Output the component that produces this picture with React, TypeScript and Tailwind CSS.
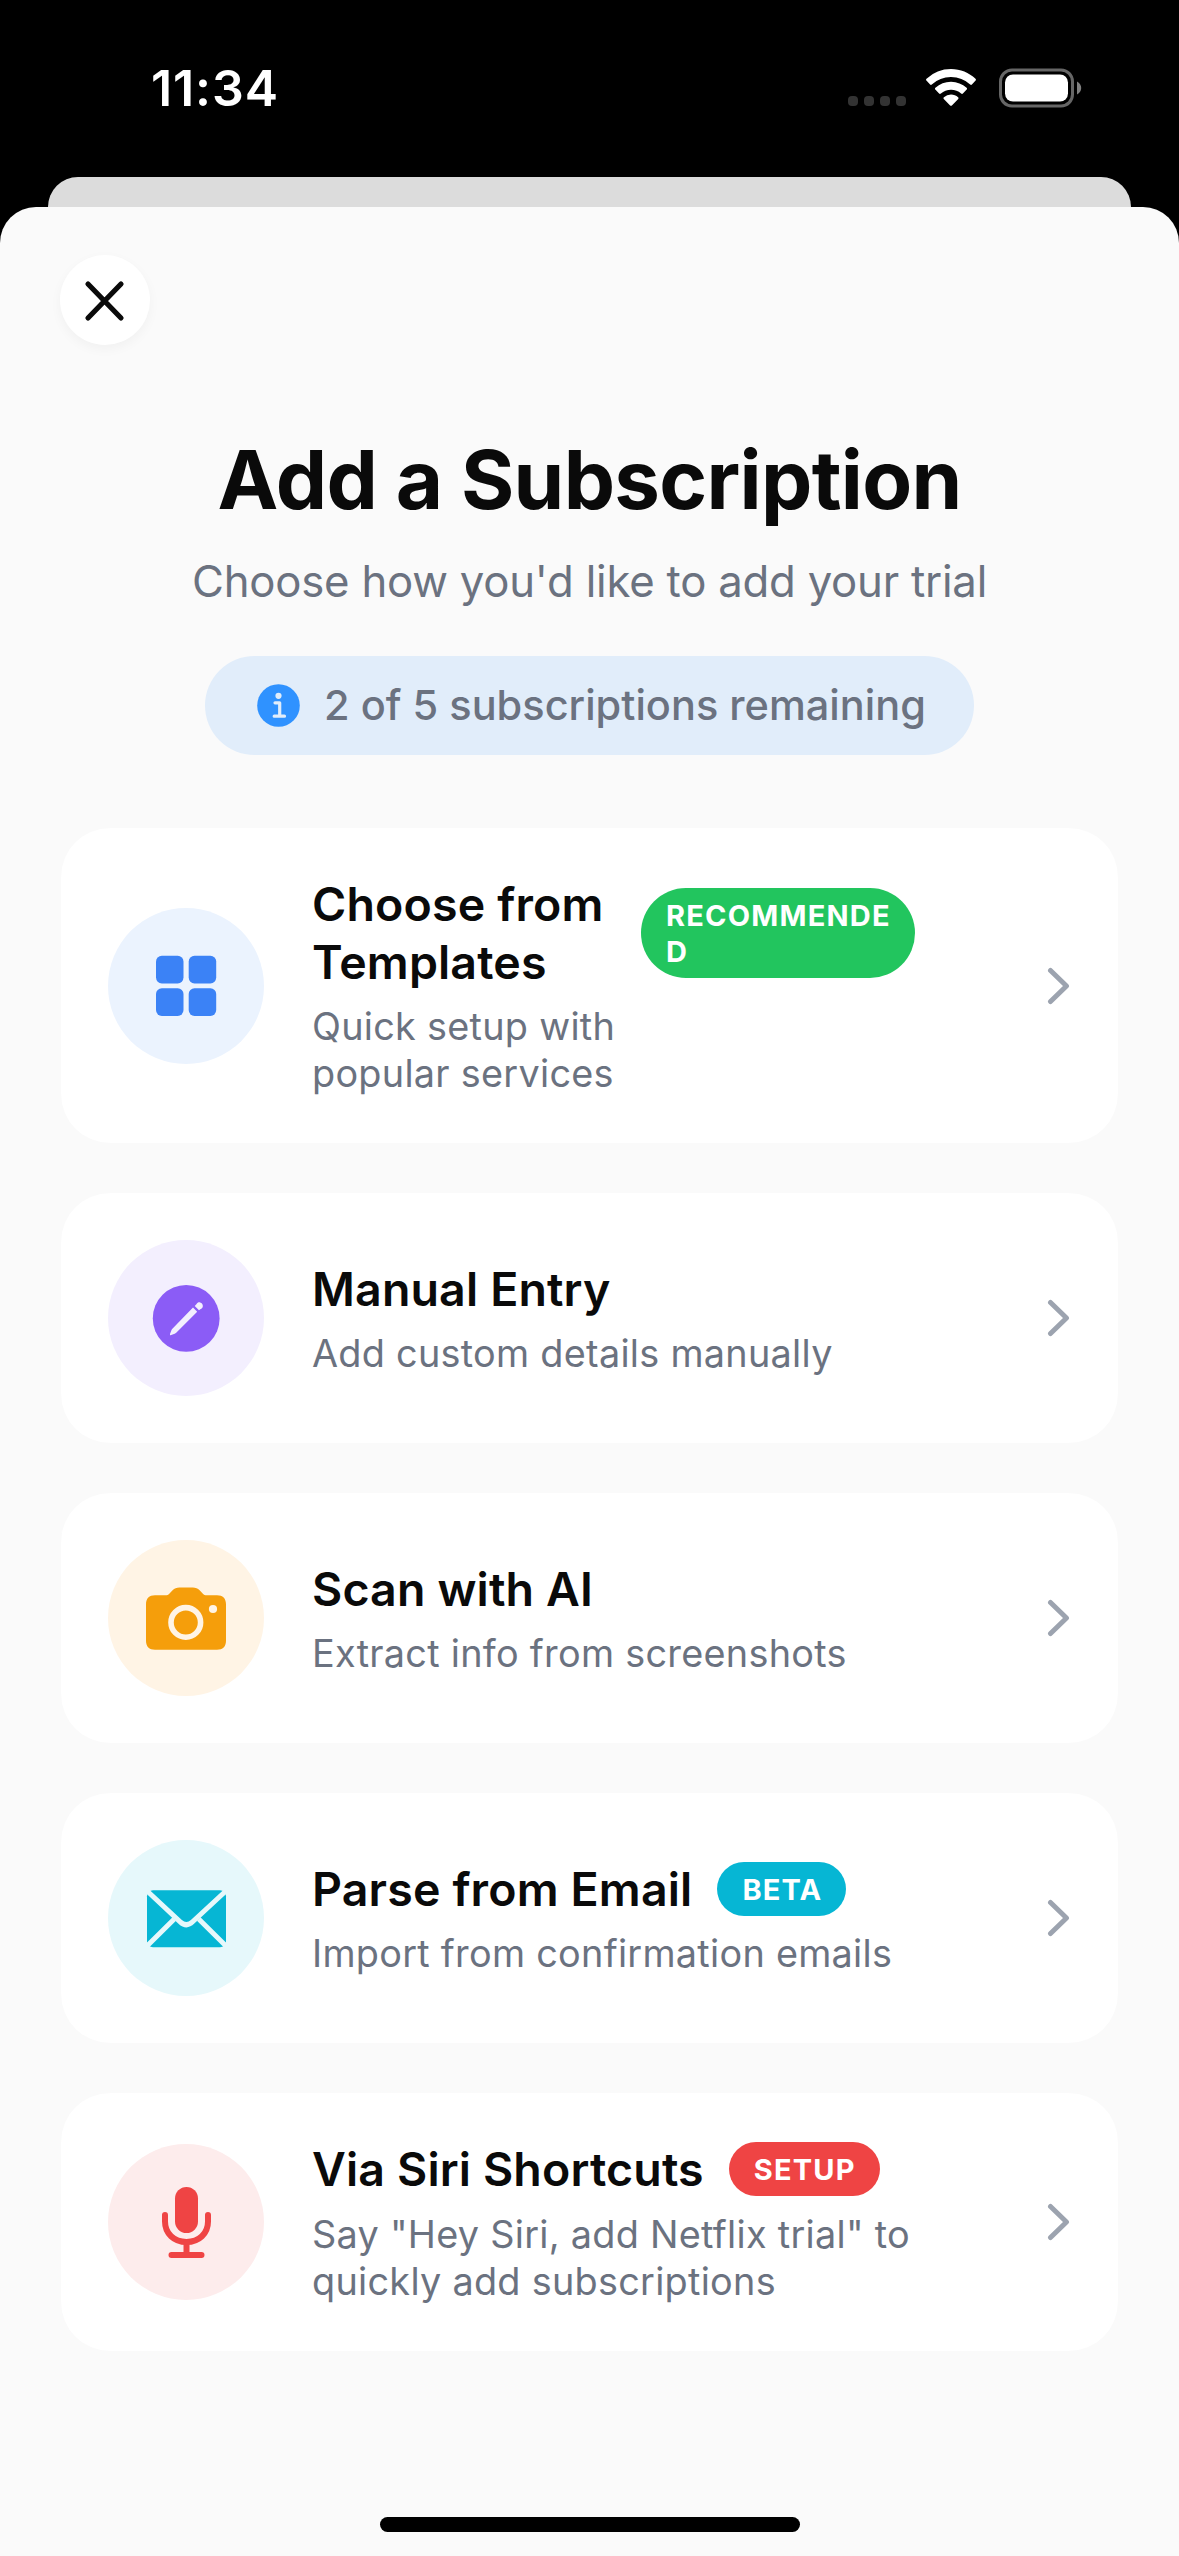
import type { ReactNode } from "react";

function StatusBar() {
  return (
    <header className="flex h-[177px] items-start justify-between bg-black pt-[58px] pr-[94px] pl-[151px]">
      <div className="text-[50px] leading-[60px] font-semibold tracking-[0.9px] text-white">11:34</div>
      <div className="flex h-[60px] items-center">
        <div className="mt-[26px] mr-[19px] flex gap-[6px]">
          <span className="size-[10px] rounded-[4px] bg-[#333333]" />
          <span className="size-[10px] rounded-[4px] bg-[#333333]" />
          <span className="size-[10px] rounded-[4px] bg-[#333333]" />
          <span className="size-[10px] rounded-[4px] bg-[#333333]" />
        </div>
        <svg className="mr-[22px] h-[38px] w-[52px]" viewBox="0 0 52 38" fill="#fff">
          <path d="M26 0c9.400 0 18 3.700 24.500 9.700.6.600.6 1.300.1 1.900l-3.700 3.900c-.5.500-1.200.5-1.700 0A28.200 28.200 0 0 0 26 8 28.200 28.200 0 0 0 6.800 15.500c-.5.500-1.200.5-1.700 0l-3.700-3.900c-.5-.6-.5-1.300.1-1.900A36 36 0 0 1 26 0z" />
          <path d="M26 12.700c6 0 11.400 2.300 15.600 6.100.6.600.6 1.300.1 1.800l-3.800 3.900c-.5.500-1.200.5-1.800 0A15.300 15.300 0 0 0 26 20.800c-3.900 0-7.400 1.400-10.100 3.700-.6.500-1.300.5-1.800 0l-3.800-3.900c-.5-.5-.5-1.200.1-1.800A23.200 23.200 0 0 1 26 12.700z" />
          <path d="M26 25.600c2.700 0 5.200 1 7.100 2.600.6.500.6 1.200.1 1.700l-6.300 6.500c-.5.500-1.300.5-1.800 0l-6.300-6.500c-.5-.5-.5-1.200.1-1.700a11 11 0 0 1 7.100-2.600z" />
        </svg>
        <svg className="h-[40px] w-[86px]" viewBox="0 0 86 40">
          <rect x="1.500" y="2" width="72" height="36" rx="11.500" fill="none" stroke="#666666" strokeWidth="3" />
          <rect x="6" y="6.500" width="63" height="27" rx="8" fill="#fff" />
          <path d="M78 13.500c2.600 1.300 4.200 3.600 4.200 6.500s-1.600 5.200-4.200 6.500z" fill="#808080" />
        </svg>
      </div>
    </header>
  );
}

function GridIcon() {
  return (
    <svg className="size-[100px]" viewBox="0 0 100 100" fill="#3b82f6">
      <rect x="20" y="19.700" width="27.500" height="27.700" rx="5.800" />
      <rect x="52.700" y="19.700" width="27.500" height="27.700" rx="5.800" />
      <rect x="20" y="52.200" width="27.500" height="27.700" rx="5.800" />
      <rect x="52.700" y="52.200" width="27.500" height="27.700" rx="5.800" />
    </svg>
  );
}

function PencilIcon() {
  return (
    <svg className="size-[100px]" viewBox="0 -2 100 100">
      <circle cx="50.200" cy="48.400" r="33.400" fill="#8b5cf6" />
      <path
        d="M57 37.600l4.200 4.200-21 20.900c-.5.500-.9.800-1.500 1l-3.500 1.400c-.8.300-1.500-.4-1.200-1.200l1.400-3.600c.2-.6.500-1.100 1-1.600zM58.700 35.900l1.900-1.900c.6-1.300 2-1.900 3.500-1.600 1.900.4 3 2.200 2.700 4-.2 1.100-.8 1.800-1.700 2.300l-2.100 1.600z"
        fill="#f3effe"
      />
    </svg>
  );
}

function CameraIcon() {
  return (
    <svg className="size-[100px]" viewBox="0 -2 100 100">
      <path
        d="M19 25.300h10.500c1.800 0 2.700-.5 3.800-1.600l3.300-3.400c1.900-2 3.900-2.900 6.900-2.900h13.200c3 0 5 .9 6.900 2.900l3.300 3.400c1.100 1.100 2 1.600 3.800 1.600H81c5.800 0 9 3.200 9 9v36.500c0 5.800-3.200 9-9 9H19c-5.800 0-9-3.200-9-9V34.300c0-5.800 3.200-9 9-9z"
        fill="#f59e0b"
      />
      <circle cx="49.800" cy="52.400" r="14.800" fill="none" stroke="#fff4e5" strokeWidth="5.600" />
      <circle cx="77" cy="39" r="4.100" fill="#fff4e5" />
    </svg>
  );
}

function MailIcon() {
  return (
    <svg className="size-[100px]" viewBox="0 0 100 100">
      <rect x="11" y="22.200" width="79" height="57" rx="6" fill="#06b6d4" />
      <g fill="none" stroke="#e6f8fb" strokeWidth="5">
        <path d="M9 21l35.200 32.800c4 3.800 8.400 3.800 12.400 0L92 21" />
        <path d="M9.500 79.500L38.300 51M91.500 79.500L62.700 51" />
      </g>
    </svg>
  );
}

function MicIcon() {
  return (
    <svg className="size-[100px]" viewBox="0 2 100 100">
      <rect x="39" y="17" width="23" height="46" rx="11.500" fill="#ef4444" />
      <g fill="none" stroke="#ef4444" strokeWidth="6" strokeLinecap="round">
        <path d="M29 45v6.500C29 63.500 38 72 50.500 72S72 63.500 72 51.500V45" />
        <path d="M50.500 72v12M35.500 85h30" />
      </g>
    </svg>
  );
}

function Chevron() {
  return (
    <svg className="h-[40px] w-[24px] shrink-0" viewBox="0 0 24 40" fill="none">
      <path d="M3.500 4.500L19.500 20l-16 15.500" stroke="#9ca3af" strokeWidth="5" strokeLinecap="round" strokeLinejoin="round" />
    </svg>
  );
}

type Option = {
  title: ReactNode;
  titleClass?: string;
  detail: ReactNode;
  icon: ReactNode;
  tint: string;
  badge?: ReactNode;
  badgeClass?: string;
};

const options: Option[] = [
  {
    title: <>Choose from<br />Templates</>,
    titleClass: "w-[304px]",
    detail: <>Quick setup with<br />popular services</>,
    icon: <GridIcon />,
    tint: "bg-[#ebf3fe]",
    badge: <>RECOMMENDE<br />D</>,
    badgeClass: "w-[274px] bg-[#22c55e]",
  },
  {
    title: "Manual Entry",
    detail: "Add custom details manually",
    icon: <PencilIcon />,
    tint: "bg-[#f3effe]",
  },
  {
    title: "Scan with AI",
    detail: "Extract info from screenshots",
    icon: <CameraIcon />,
    tint: "bg-[#fff4e5]",
  },
  {
    title: "Parse from Email",
    detail: "Import from confirmation emails",
    icon: <MailIcon />,
    tint: "bg-[#e6f8fb]",
    badge: "BETA",
    badgeClass: "bg-[#06b6d4]",
  },
  {
    title: "Via Siri Shortcuts",
    detail: <>Say "Hey Siri, add Netflix trial" to<br />quickly add subscriptions</>,
    icon: <MicIcon />,
    tint: "bg-[#fdecec]",
    badge: "SETUP",
    badgeClass: "bg-[#ef4444]",
  },
];

function OptionCard({ title, titleClass = "", detail, icon, tint, badge, badgeClass = "" }: Option) {
  return (
    <button className="flex w-full items-center rounded-[50px] border border-[#fafafa] bg-white p-[47px] text-left">
      <span className={`flex size-[156px] shrink-0 items-center justify-center rounded-full ${tint}`}>{icon}</span>
      <span className="mt-px -mb-px ml-12 flex flex-1 flex-col gap-3 whitespace-nowrap">
        <span className="flex items-center gap-6">
          <span className={`text-[46.5px] leading-[57.5px] font-semibold tracking-[0.15px] text-[#0a0a0a] ${titleClass}`}>
            {title}
          </span>
          {badge && (
            <span
              className={`mb-[2px] ml-px rounded-[45px] pt-[10px] pr-[24px] pb-[8px] pl-[25px] text-[29px] leading-[36px] font-bold tracking-[1.2px] text-white ${badgeClass}`}
            >
              {badge}
            </span>
          )}
        </span>
        <span className="text-[37.8px] leading-[47px] tracking-[0.28px] text-[#6b7280]">{detail}</span>
      </span>
      <Chevron />
    </button>
  );
}

export default function App() {
  return (
    <div className="flex h-[2556px] w-[1179px] flex-col overflow-hidden bg-black font-['Inter',sans-serif]">
      <StatusBar />
      <div className="mx-[48px] h-[30px] shrink-0 rounded-t-[32px] bg-[#dcdcdc]" />
      <main className="flex flex-1 flex-col rounded-t-[36px] bg-[#fafafa] px-[60px] pt-[48px]">
        <button
          aria-label="Close"
          className="flex size-[90px] items-center justify-center rounded-full bg-white shadow-[0_4px_12px_rgba(0,0,0,0.04)]"
        >
          <svg className="size-[48px]" viewBox="0 0 48 48" fill="none">
            <path d="M7 8l33 34M40 8L7 42" stroke="#0a0a0a" strokeWidth="5.200" strokeLinecap="round" />
          </svg>
        </button>

        <div className="mt-[85px] flex flex-col items-center whitespace-nowrap">
          <h1 className="text-[81.5px] leading-[100px] font-bold tracking-[-0.7px] text-[#0a0a0a]">Add a Subscription</h1>
          <p className="mt-[25px] text-[43.7px] leading-[54px] tracking-[-0.22px] text-[#6b7280]">
            Choose how you'd like to add your trial
          </p>
          <div className="mt-[47px] flex h-[99px] items-center rounded-full bg-[#e1edfa] pr-[48px] pl-[52px] text-[41.5px] font-medium text-[#6b7280]">
            <svg className="mr-[24px] size-[43px]" viewBox="0 0 43 43">
              <circle cx="21.500" cy="21.500" r="21.300" fill="#2f92ff" />
              <circle cx="21.500" cy="11.800" r="3.100" fill="#e1edfa" />
              <path d="M18 18.800h4.700v13M17.200 32.200h10.300" fill="none" stroke="#e1edfa" strokeWidth="3.200" strokeLinecap="round" strokeLinejoin="round" />
            </svg>
            2 of 5 subscriptions remaining
          </div>
        </div>

        <div className="mt-[72px] flex flex-col gap-12">
          {options.map((option, i) => (
            <OptionCard key={i} {...option} />
          ))}
        </div>

        <div className="mt-auto mb-[24px] h-[15px] w-[420px] self-center rounded-full bg-black" />
      </main>
    </div>
  );
}
